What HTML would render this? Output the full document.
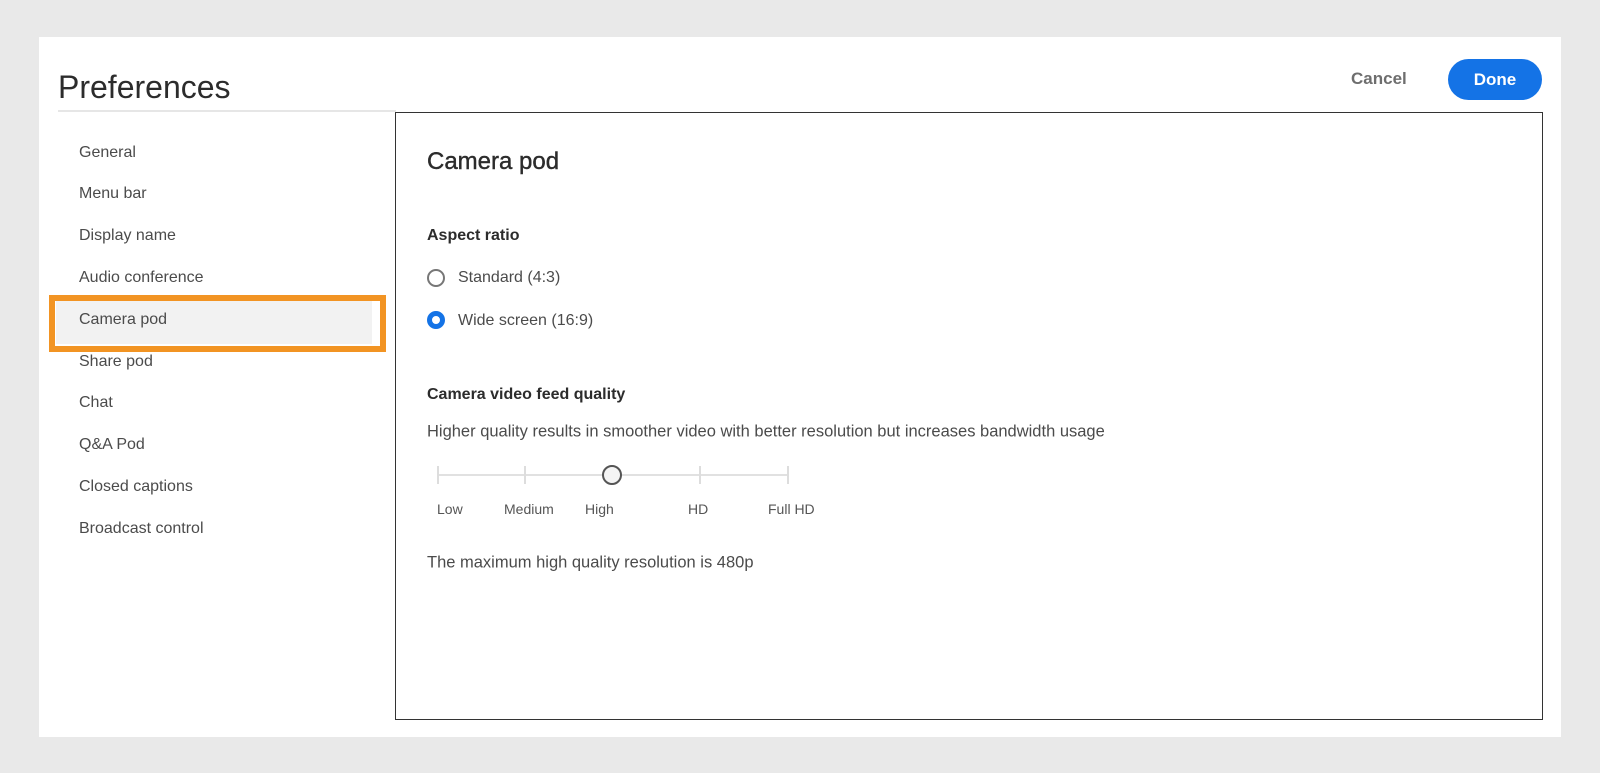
<!DOCTYPE html>
<html><head><meta charset="utf-8"><style>
*{margin:0;padding:0;box-sizing:border-box}
body{width:1600px;height:773px;background:#e9e9e9;font-family:"Liberation Sans",sans-serif;color:#2c2c2c;position:relative;overflow:hidden}
.a{position:absolute;white-space:nowrap}
.card{left:39px;top:37px;width:1522px;height:700px;background:#fff}
.nav{left:79px;font-size:16px;color:#4b4b4b;transform:translateY(-50%)}
.t{transform:translateY(-50%)}
</style></head><body>
<div class="a card"></div>
<div class="a" style="left:58px;top:69px;font-size:32px;color:#2c2c2c">Preferences</div>
<div class="a" style="left:58px;top:110px;width:338px;height:2px;background:#e6e6e6"></div>
<div class="a t" style="left:1351px;top:79px;font-size:17px;font-weight:bold;color:#6e6e6e">Cancel</div>
<div class="a" style="left:1448px;top:59px;width:94px;height:41px;border-radius:21px;background:#1473e6;color:#fff;font-weight:bold;font-size:17px;text-align:center;line-height:41px">Done</div>
<div class="a" style="left:395px;top:112px;width:1148px;height:608px;border:1.5px solid #333"></div>
<div class="a" style="left:49px;top:295px;width:337px;height:57px;border:6px solid #f29423;background:#fff"></div>
<div class="a" style="left:56px;top:301px;width:316px;height:43px;background:#f2f2f2"></div>
<div class="a nav" style="top:153px">General</div>
<div class="a nav" style="top:194px">Menu bar</div>
<div class="a nav" style="top:236px">Display name</div>
<div class="a nav" style="top:278px">Audio conference</div>
<div class="a nav" style="top:320px">Camera pod</div>
<div class="a nav" style="top:362px">Share pod</div>
<div class="a nav" style="top:403px">Chat</div>
<div class="a nav" style="top:445px">Q&amp;A Pod</div>
<div class="a nav" style="top:487px">Closed captions</div>
<div class="a nav" style="top:529px">Broadcast control</div>
<div class="a t" style="left:427px;top:162px;font-size:24px;color:#2c2c2c;-webkit-text-stroke:0.4px #2c2c2c">Camera pod</div>
<div class="a t" style="left:427px;top:236px;font-size:16px;font-weight:bold;color:#2c2c2c">Aspect ratio</div>
<div class="a" style="left:427px;top:269px;width:18px;height:18px;border:2px solid #777;border-radius:50%"></div>
<div class="a t" style="left:458px;top:278px;font-size:16px;color:#4b4b4b">Standard (4:3)</div>
<div class="a" style="left:427px;top:311px;width:18px;height:18px;border:5px solid #1473e6;border-radius:50%;background:#fff"></div>
<div class="a t" style="left:458px;top:321px;font-size:16px;color:#4b4b4b">Wide screen (16:9)</div>
<div class="a t" style="left:427px;top:395px;font-size:16px;font-weight:bold;color:#2c2c2c">Camera video feed quality</div>
<div class="a t" style="left:427px;top:432px;font-size:16.5px;color:#4b4b4b">Higher quality results in smoother video with better resolution but increases bandwidth usage</div>
<div class="a" style="left:438px;top:474px;width:350px;height:2px;background:#e1e1e1"></div>
<div class="a" style="left:437px;top:466px;width:2px;height:18px;background:#ddd"></div>
<div class="a" style="left:524px;top:466px;width:2px;height:18px;background:#ddd"></div>
<div class="a" style="left:699px;top:466px;width:2px;height:18px;background:#ddd"></div>
<div class="a" style="left:787px;top:466px;width:2px;height:18px;background:#ddd"></div>
<div class="a" style="left:602px;top:465px;width:20px;height:20px;border:2px solid #555;border-radius:50%;background:#f4f4f4"></div>
<div class="a t" style="left:437px;top:509px;font-size:14px;color:#555">Low</div>
<div class="a t" style="left:504px;top:509px;font-size:14px;color:#555">Medium</div>
<div class="a t" style="left:585px;top:509px;font-size:14px;color:#555">High</div>
<div class="a t" style="left:688px;top:509px;font-size:14px;color:#555">HD</div>
<div class="a t" style="left:768px;top:509px;font-size:14px;color:#555">Full HD</div>
<div class="a t" style="left:427px;top:563px;font-size:16.5px;color:#4b4b4b">The maximum high quality resolution is 480p</div>
</body></html>
